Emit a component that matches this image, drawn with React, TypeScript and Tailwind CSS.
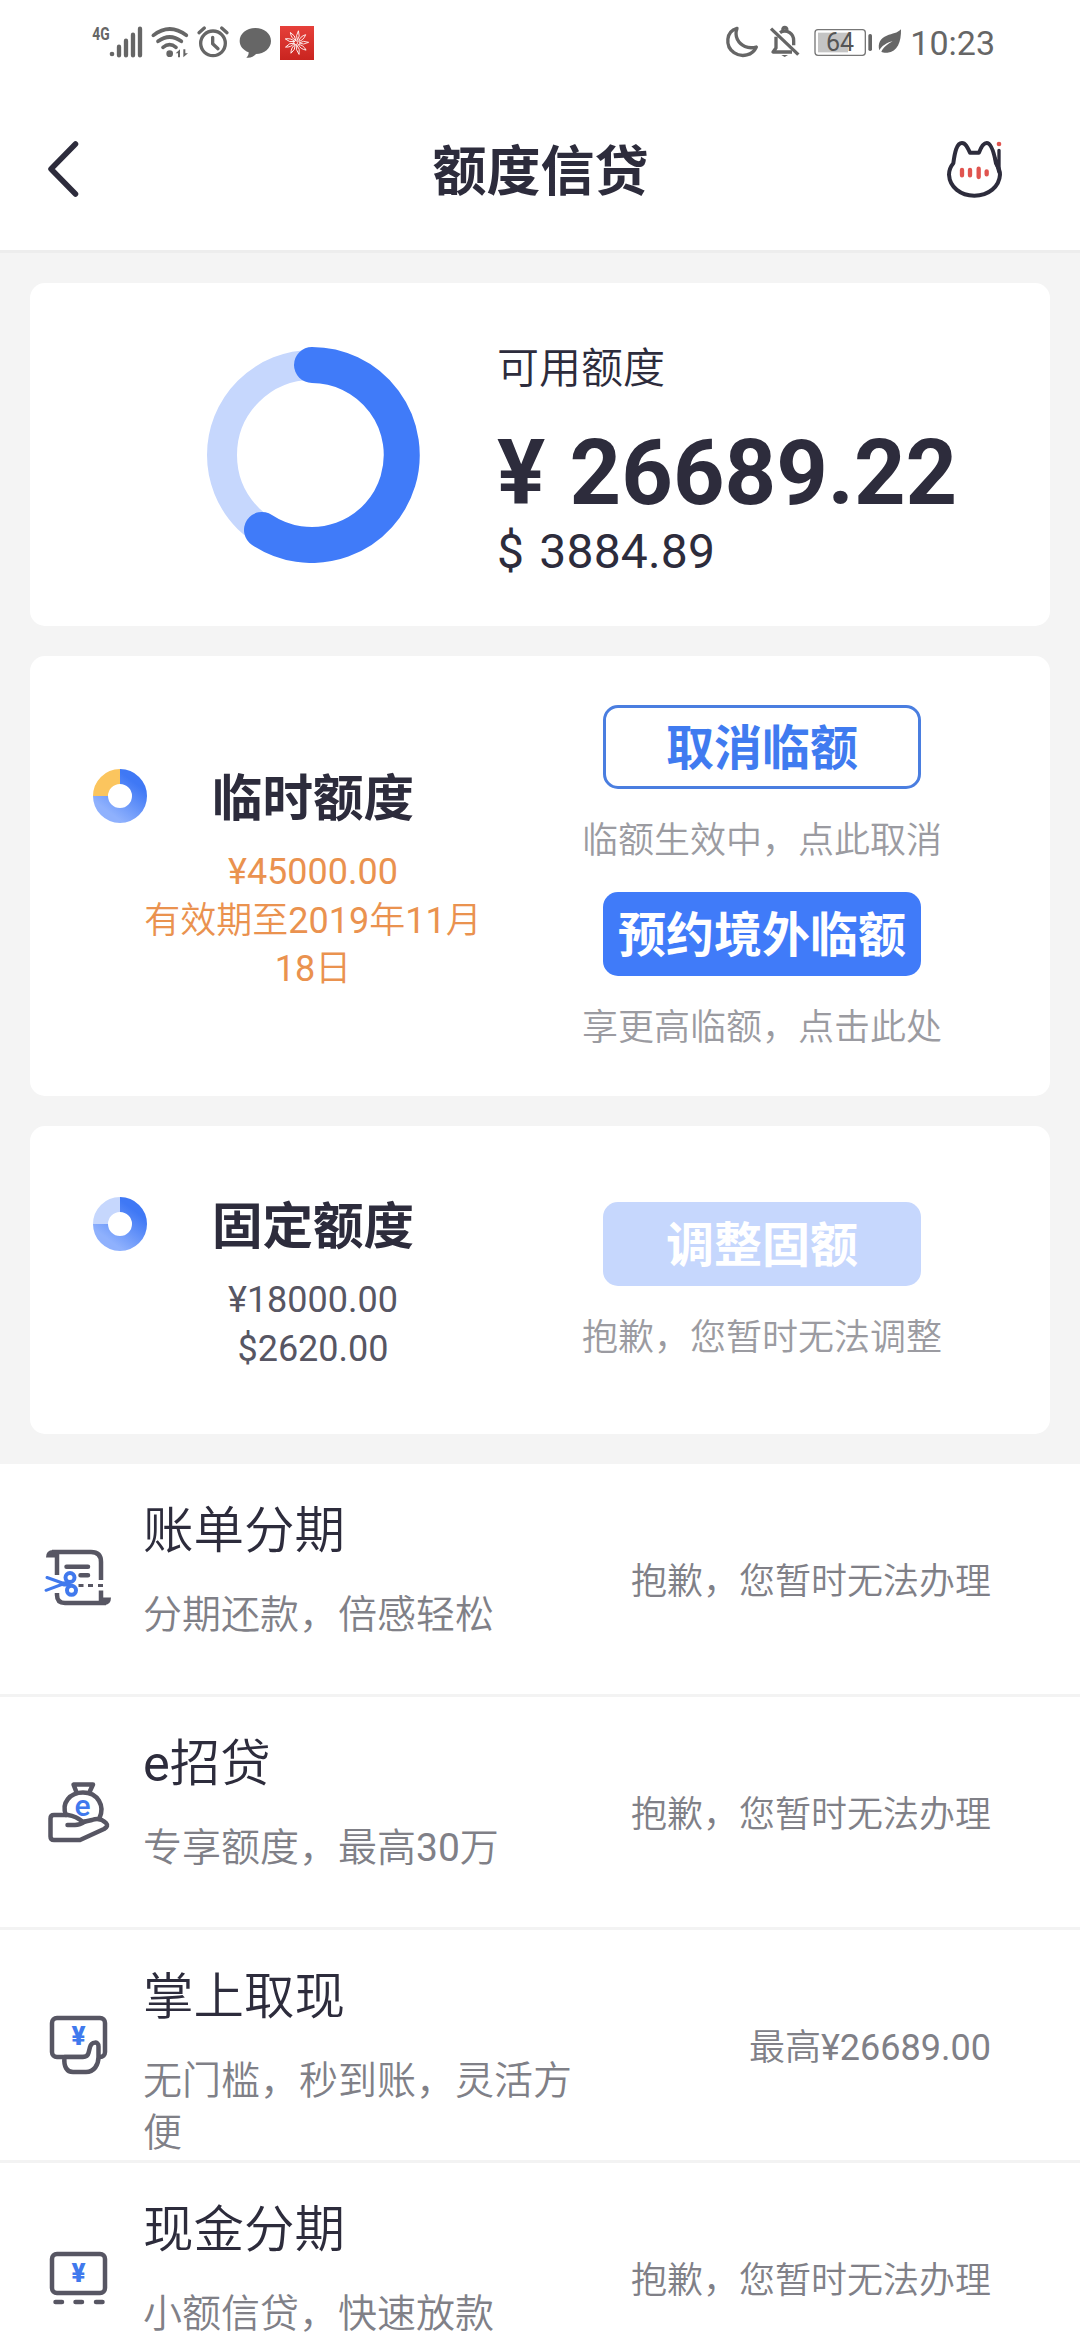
import type { ReactNode } from 'react';

// --- Types ---
interface ServiceItem {
  title: string;
  desc: string;
  status: string;
  icon: ReactNode;
}

interface LimitAction {
  label: string;
  hint: string;
  variant: 'outline' | 'solid' | 'disabled';
}

// --- Status bar ---

function StatusBar() {
  return (
    <div className="flex h-[75px] items-start justify-between pt-[10px] pl-[90px] pr-[85px]">
      <div className="flex items-start">
        {/* Signal */}
        <svg className="h-[65px] w-[56px]" viewBox="30 0 168 195">
          <text x="37" y="91" fontSize="56" fontWeight="700" fill="#666" textLength="52" lengthAdjust="spacingAndGlyphs">4G</text>
          <circle cx="96" cy="132" r="7" fill="#666" />
          <path d="M117 110V136M138 92V136M159 74V136M180 56V136" stroke="#666" strokeWidth="13" strokeLinecap="round" />
        </svg>
        {/* Wifi */}
        <svg className="h-[65px] w-[46px]" viewBox="198 0 138 195" fill="none" stroke="#666" strokeWidth="11" strokeLinecap="round">
          <path d="M220 76Q269 38 319 76M234 94Q269 68 304 94M249 112Q269 96 288 112" />
          <circle cx="269" cy="131" r="10" fill="#666" stroke="none" />
          <path d="M287 130L300 118V142H294V130ZM324 130L310 142V118H316V130Z" fill="#666" stroke="none" />
        </svg>
        {/* Alarm */}
        <svg className="h-[65px] w-[42px]" viewBox="336 0 126 195" fill="none" stroke="#666" strokeWidth="10" strokeLinecap="round" strokeLinejoin="round">
          <circle cx="399" cy="100" r="37" />
          <path d="M398 82V101L414 116M357 68L373 54M425 54L441 68" />
        </svg>
        {/* Message */}
        <svg className="h-[65px] w-[42px]" viewBox="462 0 126 195">
          <path d="M526 54c27 0 47 17 47 39s-20 39-45 39c-7 8-17 13-29 11c5-4 7-9 7-16c-17-7-27-19-27-34c0-22 20-39 47-39z" fill="#666" />
        </svg>
        <svg className="h-[65px] w-[42px]" viewBox="588 0 126 195">
          <defs>
            <linearGradient id="appRed" x1="0" y1="0" x2="0" y2="1">
              <stop offset="0" stopColor="#e6403a" />
              <stop offset="1" stopColor="#c9241f" />
            </linearGradient>
          </defs>
          <rect x="600" y="48" width="102" height="102" fill="url(#appRed)" />
          <g fill="none" stroke="#fff" strokeWidth="2.500">
            {[0, 40, 80, 120, 160, 200, 240, 280, 320].map(deg => (
              <path key={deg} d="M657 99Q670 90 686 97Q670 106 657 99" transform={`rotate(${deg} 650 98)`} />
            ))}
            <circle cx="647" cy="98" r="6" />
          </g>
        </svg>
      </div>

      <div className="flex items-start">
        {/* Do not disturb */}
        <svg className="h-[65px] w-[38px]" viewBox="40 0 114 195" fill="none" stroke="#666" strokeWidth="10" strokeLinejoin="round">
          <path d="M79 55C46 64 42 108 70 128C94 144 126 136 137 111C112 118 90 108 80 88C75 77 75 66 79 55Z" />
        </svg>
        {/* Muted bell */}
        <svg className="h-[65px] w-[48px]" viewBox="154 0 144 195" fill="none" stroke="#666" strokeWidth="10" strokeLinejoin="round">
          <path d="M181 56L263 134" />
          <path d="M196 80V114L187 126H244M208 68Q222 58 237 68Q249 76 249 92V106" />
          <path d="M216 60Q217 52 222 52Q228 52 229 60" />
          <path d="M212 135H232L222 141Z" fill="#666" stroke="none" />
        </svg>
        {/* Battery */}
        <svg className="h-[65px] w-[66px]" viewBox="299 0 198 195">
          <rect x="314" y="59" width="151" height="77" rx="9" fill="#fff" stroke="#777" strokeWidth="4" />
          <rect x="323" y="68" width="90" height="59" fill="#c4c4c4" />
          <rect x="474" y="72" width="11" height="51" rx="5" fill="#666" />
          <text x="347" y="122" fontSize="75" fill="#555">64</text>
        </svg>
        {/* Power saving leaf */}
        <svg className="h-[65px] w-[34px]" viewBox="498 0 102 195">
          <path d="M573 58C574 96 562 126 532 128C524 129 518 127 514 125C520 112 534 101 548 94C530 98 515 108 508 121C502 100 512 84 530 77C548 70 562 70 573 58Z" fill="#666" />
        </svg>
        <span className="mt-[13px] text-[34px] leading-[40px] text-[#666]">10:23</span>
      </div>
    </div>
  );
}

// --- Icons ---

function AssistantIcon() {
  return (
    <svg className="h-[90px] w-[100px]" viewBox="0 0 300 270" fill="none">
      <path
        d="M120 86C112 68 106 57 96 57C80 57 74 86 70 118C60 130 57 140 57 152C59 190 92 215 133 215C176 215 208 188 210 152C210 140 205 128 198 118C192 86 184 57 170 57C160 57 153 70 147 86Z"
        stroke="#2d2c3c"
        strokeWidth="12"
        strokeLinejoin="round"
      />
      <path d="M207 79V145L196 105" stroke="#2d2c3c" strokeWidth="10" strokeLinecap="round" />
      <circle cx="207" cy="60" r="7" fill="#e0544f" />
      <path d="M96 138V154M120 138V154M146 134V159M170 142V151" stroke="#e0544f" strokeWidth="13" strokeLinecap="round" />
    </svg>
  );
}

function BillIcon() {
  return (
    <svg className="size-[72px]" viewBox="0 0 72 72" fill="none" stroke="#575663" strokeWidth="4.500">
      <path d="M10 9H49Q59 9 59 19V37M15 11V32M15 50V52Q15 60 23 60H64M59 47.500V58" />
      <path d="M4 14.500Q4 7 11 7H17V14.500ZM69 54.500Q69 62 62 62H57V54.500Z" fill="#575663" stroke="none" />
      <path d="M24.500 23.700H46M38.500 32.300H46" strokeLinecap="round" />
      <path d="M36.500 42.500H41.500M46 42.500H51M56 42.500H61" strokeWidth="3" />
      <g stroke="#4079ed" strokeLinecap="round">
        <circle cx="28" cy="34.500" r="4.500" strokeWidth="4" />
        <circle cx="29.500" cy="47.300" r="4.500" strokeWidth="4" />
        <path d="M5 34.500L26 42M4 47.300L25 39.500" strokeWidth="3" />
        <path d="M22 41H26" strokeWidth="5" />
      </g>
    </svg>
  );
}

function LoanIcon() {
  return (
    <svg className="size-[72px]" viewBox="0 0 72 72" fill="none" stroke="#575663" strokeWidth="4.500" strokeLinejoin="round" strokeLinecap="round">
      <path d="M34 15L31.500 8.500H51L48 15" />
      <path d="M24 39C19 27 28 16.500 41 16.500C56 16.500 63 30 57.500 42" />
      <path d="M26 39H12Q8.500 39 8.500 42.500V60.500Q8.500 64 12 64H38L62 53Q67 50 64 47Q58 41 50 44L41 46Q34 40 26 39Z" />
      <path d="M25.500 49H33Q38 49 43 45.500" />
      <text x="40.500" y="39.500" textAnchor="middle" fontSize="30" fontWeight="500" fill="#4079ed" stroke="none">e</text>
    </svg>
  );
}

function CashIcon() {
  return (
    <svg className="size-[72px]" viewBox="0 0 72 72" fill="none" stroke="#575663" strokeWidth="4.500" strokeLinejoin="round">
      <rect x="10" y="9" width="53" height="39" rx="5" />
      <path d="M22.500 48C21.500 58 25 63 31 63H44C52 63 56.500 56 56.500 48V37.500C56.500 32 49.500 32.500 48 38L46.500 44Q45.500 48 41 48Z" fill="#fff" />
      <text x="36.500" y="36" textAnchor="middle" fontSize="26" fontWeight="900" fill="#4079ed" stroke="none">¥</text>
    </svg>
  );
}

function InstallmentIcon() {
  return (
    <svg className="size-[72px]" viewBox="0 0 72 72" fill="none" stroke="#575663" strokeWidth="4.500">
      <rect x="10" y="12" width="53" height="39" rx="5" />
      <path d="M13.500 60H20M33.500 60H40M54 60H60.500" strokeLinecap="round" />
      <text x="36.500" y="39.500" textAnchor="middle" fontSize="26" fontWeight="900" fill="#4079ed" stroke="none">¥</text>
    </svg>
  );
}

function MiniDonut({ id, quarter }: { id: string; quarter: string }) {
  return (
    <svg className="size-[54px]" viewBox="0 0 54 54" fill="none" strokeWidth="15">
      <defs>
        <linearGradient id={id} x1="0.8" y1="0.1" x2="0.2" y2="0.9">
          <stop offset="0" stopColor="#3f78f5" />
          <stop offset="1" stopColor="#8fb1fd" />
        </linearGradient>
      </defs>
      <path d="M27 7.500A19.500 19.500 0 1 1 7.500 27" stroke={`url(#${id})`} />
      <path d="M7.500 27A19.500 19.500 0 0 1 27 7.500" stroke={quarter} />
    </svg>
  );
}

function UsageRing() {
  return (
    <svg className="size-[216px]" viewBox="0 0 216 216" fill="none">
      <circle cx="108" cy="108" r="90" stroke="#c6d7fd" strokeWidth="30" />
      <path d="M108 18A90 90 0 1 1 58 183" stroke="#407bf9" strokeWidth="36" strokeLinecap="round" />
    </svg>
  );
}

// --- Cards ---

const buttonStyles = {
  outline: 'border-[3px] border-[#4a7ee0] text-[#407bf0]',
  solid: 'bg-[#407bf9] text-white',
  disabled: 'bg-[#c6d7fd] text-white',
};

function ActionButton({ label, hint, variant }: LimitAction) {
  return (
    <div className="flex flex-col items-center">
      <button
        className={`flex h-[84px] w-[318px] items-center justify-center rounded-[15px] pt-[4px] text-[48px] leading-[60px] font-bold whitespace-nowrap font-[Roboto,'Noto_Sans_CJK_SC',sans-serif] ${buttonStyles[variant]}`}
      >
        {label}
      </button>
      <p className="mt-[28px] text-[36px] leading-[48px] whitespace-nowrap text-[#9b9ba1]">{hint}</p>
    </div>
  );
}

function LimitCard({ title, lines, lineColor, icon, actions, className }: {
  title: string;
  lines: string[];
  lineColor: string;
  icon: ReactNode;
  actions: LimitAction[];
  className: string;
}) {
  return (
    <section className={`flex rounded-[15px] bg-white pl-[63px] ${className}`}>
      <div className="shrink-0">{icon}</div>
      <div className="flex w-[332px] shrink-0 flex-col items-center">
        <h2 className="font-[Roboto,'Noto_Sans_CJK_SC',sans-serif] text-[50.500px] leading-[60px] font-bold text-[#2d2c3c]">{title}</h2>
        <div className={`mt-[19px] flex flex-col items-center text-[36px] leading-[48.500px] whitespace-nowrap ${lineColor}`}>
          {lines.map(line => (
            <span key={line}>{line}</span>
          ))}
        </div>
      </div>
      <div className="ml-[103px] flex w-[360px] flex-col gap-[27px]">
        {actions.map(action => (
          <ActionButton key={action.label} {...action} />
        ))}
      </div>
    </section>
  );
}

function ServiceRow({ item }: { item: ServiceItem }) {
  return (
    <li className="flex h-[233px] items-start border-b-[3px] border-[#f3f3f3] pl-[42px] pr-[89px]">
      <div className="mt-[79px] shrink-0">{item.icon}</div>
      <div className="mt-[37px] ml-[29px] w-[435px] shrink-0">
        <h3 className="text-[50.500px] leading-[60px] text-[#2d2c3c]">{item.title}</h3>
        <p className="mt-[28px] text-[39px] leading-[52px] text-[#808087]">{item.desc}</p>
      </div>
      <div className="mt-[94px] flex-1 text-right text-[36px] leading-[48px] whitespace-nowrap text-[#808087]">{item.status}</div>
    </li>
  );
}

const services: ServiceItem[] = [
  { title: '账单分期', desc: '分期还款，倍感轻松', status: '抱歉，您暂时无法办理', icon: <BillIcon /> },
  { title: 'e招贷', desc: '专享额度，最高30万', status: '抱歉，您暂时无法办理', icon: <LoanIcon /> },
  { title: '掌上取现', desc: '无门槛，秒到账，灵活方便', status: '最高¥26689.00', icon: <CashIcon /> },
  { title: '现金分期', desc: '小额信贷，快速放款', status: '抱歉，您暂时无法办理', icon: <InstallmentIcon /> },
];

// --- Main Page ---

export default function App() {
  return (
    <div
      lang="zh-CN"
      className="h-[2340px] w-[1080px] overflow-hidden bg-[#f4f4f4] font-[Roboto,'Noto_Sans_CJK_SC_DemiLight','Noto_Sans_CJK_SC_Light','Noto_Sans_CJK_SC',sans-serif]"
    >
      <header className="h-[253px] border-b-[3px] border-[#ededed] bg-white">
        <StatusBar />
        <div className="mt-[49px] flex h-[90px] items-center justify-between pl-[40px] pr-[50px]">
          <svg className="h-[60px] w-[100px]" viewBox="0 0 100 60" fill="none">
            <path d="M35.500 5L11 30L35.500 55" stroke="#2d2c3c" strokeWidth="5.500" strokeLinecap="round" strokeLinejoin="round" />
          </svg>
          <h1 className="mt-[7px] ml-[11px] font-[Roboto,'Noto_Sans_CJK_SC',sans-serif] text-[54px] leading-[64px] font-bold text-[#2d2c3c]">额度信贷</h1>
          <AssistantIcon />
        </div>
      </header>

      <main className="mt-[30px]">
        <div className="flex flex-col gap-[30px] px-[30px]">
          <section className="flex h-[343px] rounded-[15px] bg-white pl-[174px] text-[#2d2c3c]">
            <div className="mt-[64px] shrink-0">
              <UsageRing />
            </div>
            <div className="mt-[61px] ml-[77px] whitespace-nowrap">
              <p className="text-[42px] leading-[50px]">可用额度</p>
              <p className="mt-[35px] text-[90px] leading-[90px] font-bold [word-spacing:2px]">¥ 26689.22</p>
              <p className="mt-[5px] text-[48px] leading-[56px] tracking-[0.200px] [word-spacing:3px]">$ 3884.89</p>
            </div>
          </section>

          <LimitCard
            className="h-[440px] [&>div]:pt-[113px] [&>div:last-child]:pt-[49px]"
            title="临时额度"
            lines={['¥45000.00', '有效期至2019年11月', '18日']}
            lineColor="text-[#ea924f]"
            icon={<MiniDonut id="tempLimit" quarter="#fbc55e" />}
            actions={[
              { label: '取消临额', hint: '临额生效中，点此取消', variant: 'outline' },
              { label: '预约境外临额', hint: '享更高临额，点击此处', variant: 'solid' },
            ]}
          />

          <LimitCard
            className="h-[308px] [&>div]:pt-[71px] [&>div:last-child]:pt-[76px]"
            title="固定额度"
            lines={['¥18000.00', '$2620.00']}
            lineColor="text-[#575663]"
            icon={<MiniDonut id="fixedLimit" quarter="#c6d7fd" />}
            actions={[{ label: '调整固额', hint: '抱歉，您暂时无法调整', variant: 'disabled' }]}
          />
        </div>

        <ul className="mt-[30px] bg-white">
          {services.map(item => (
            <ServiceRow key={item.title} item={item} />
          ))}
        </ul>
      </main>
    </div>
  );
}
